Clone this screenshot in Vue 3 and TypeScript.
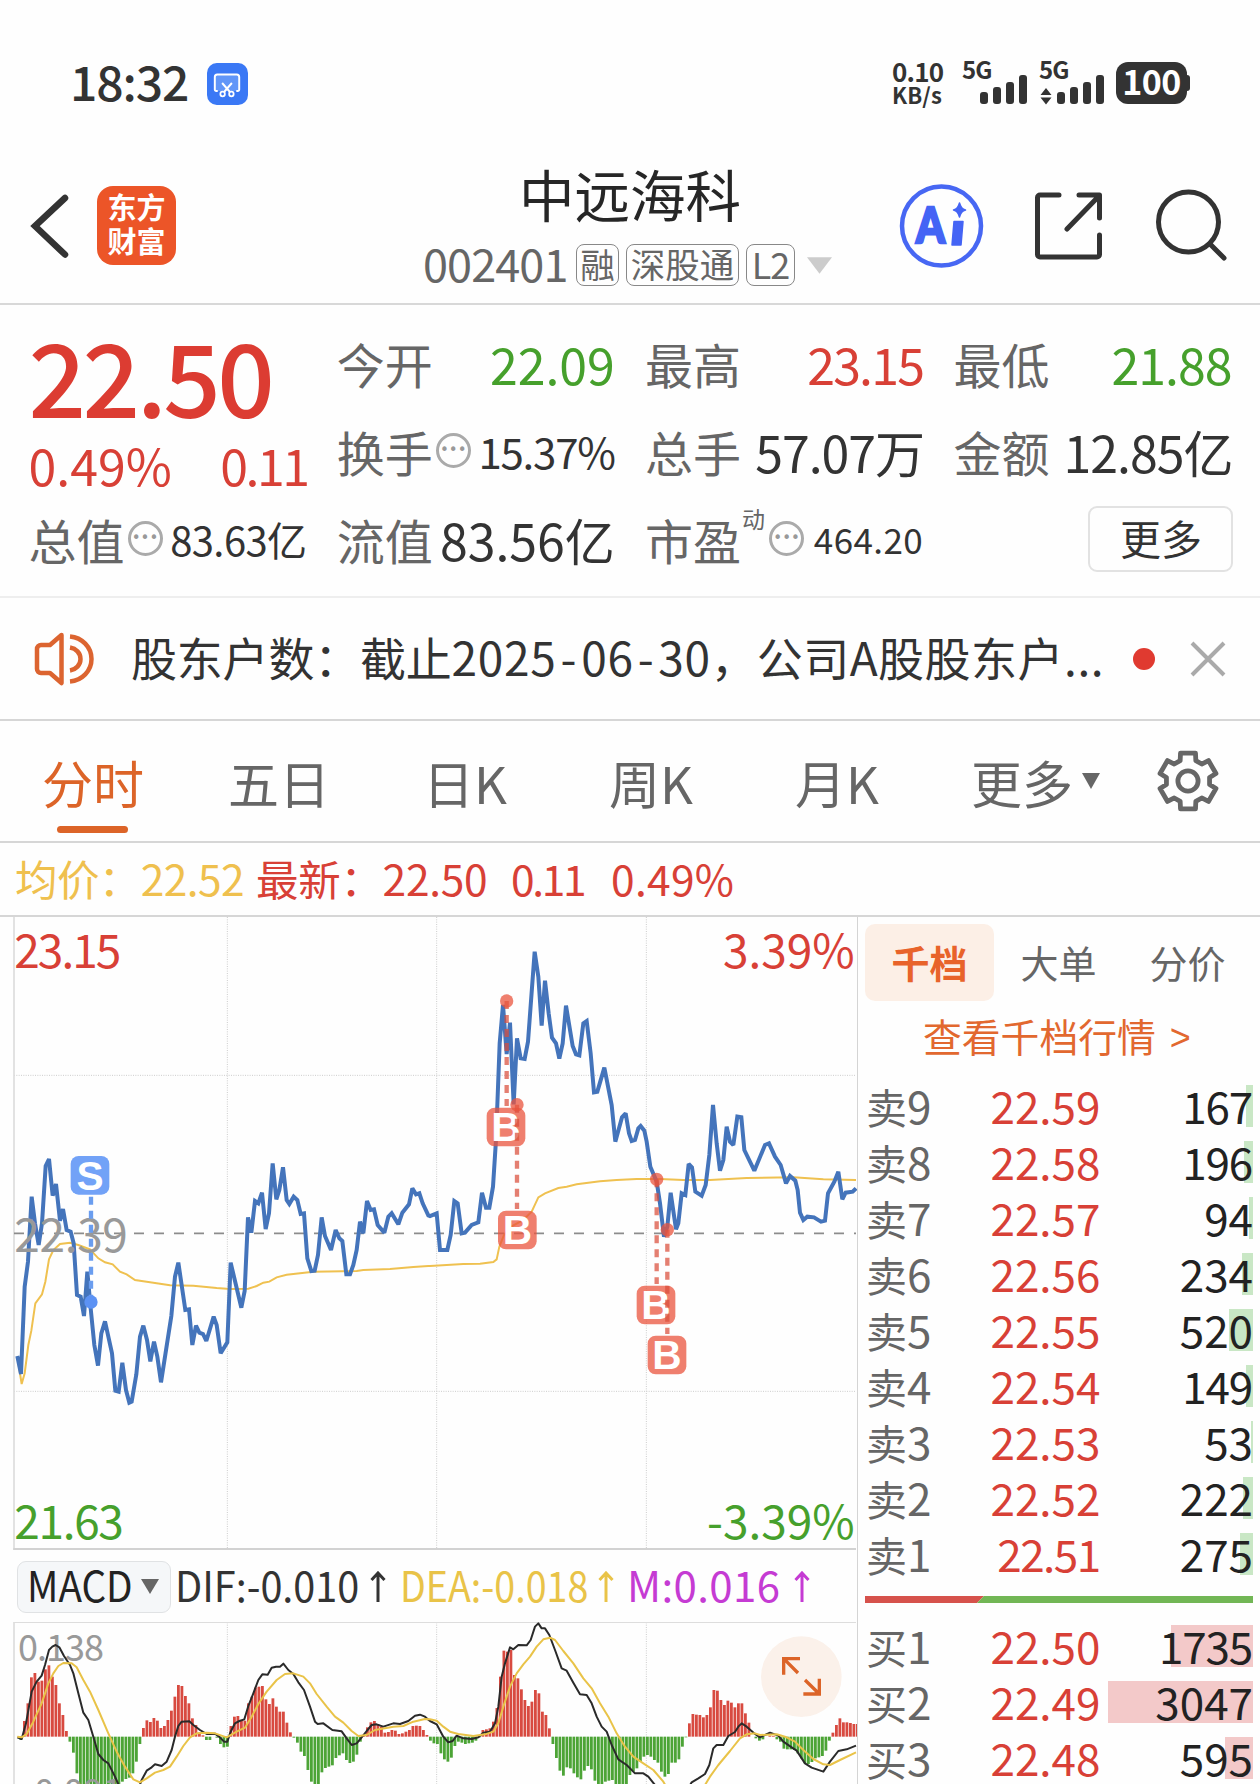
<script setup lang="ts">
interface Level {
  side: string
  n: number
  price: string
  qty: number
  bar: number
}

const sells: Level[] = [
  { side: '卖', n: 9, price: '22.59', qty: 167, bar: 7 },
  { side: '卖', n: 8, price: '22.58', qty: 196, bar: 9 },
  { side: '卖', n: 7, price: '22.57', qty: 94, bar: 4 },
  { side: '卖', n: 6, price: '22.56', qty: 234, bar: 11 },
  { side: '卖', n: 5, price: '22.55', qty: 520, bar: 24 },
  { side: '卖', n: 4, price: '22.54', qty: 149, bar: 7 },
  { side: '卖', n: 3, price: '22.53', qty: 53, bar: 2 },
  { side: '卖', n: 2, price: '22.52', qty: 222, bar: 10 },
  { side: '卖', n: 1, price: '22.51', qty: 275, bar: 13 },
]
const buys: Level[] = [
  { side: '买', n: 1, price: '22.50', qty: 1735, bar: 82 },
  { side: '买', n: 2, price: '22.49', qty: 3047, bar: 145 },
  { side: '买', n: 3, price: '22.48', qty: 595, bar: 28 },
]
// Numbers holding a "1" are set a little tighter.
const hasOne = (v: string | number): boolean => String(v).includes('1')

// Chart space uses three units per CSS pixel; the second half of the session starts at HALF.
const HALF = 1290
const join = (a: string, b: string): string =>
  a + ' ' + b.split(' ').map((p) => {
    const [x, y] = p.split(',').map(Number)
    return `${x + HALF},${y}`
  }).join(' ')

const price = join(
  '52,1338 63,1392 74,1130 84,1055 95,860 105,940 116,1005 126,940 137,768 147,747 158,857 168,822 180,932 189,897 200,960 212,965 221,1000 231,1155 242,1160 252,1218 262,1085 273,1205 283,1305 294,1367 304,1270 315,1234 336,1330 346,1442 356,1445 367,1358 378,1440 388,1478 395,1475 409,1393 420,1280 430,1247 441,1290 451,1354 462,1295 472,1340 483,1417 514,1218 525,1100 535,1058 556,1200 567,1198 577,1305 588,1247 598,1268 609,1272 619,1293 641,1220 650,1245 662,1330 682,1297 692,1058 724,1193 734,1143 744,922 754,968 765,873 775,880 786,848 797,957 807,910 818,760 829,868 838,840 849,772 860,870 868,882 881,860 892,870 902,912 912,910 922,1045 934,1083 944,1082 954,1035 965,922 975,978 993,1020 1007,960 1018,985 1027,993 1039,1093 1050,1093 1060,1065 1070,1020 1080,935 1090,970 1101,873 1112,900 1122,898 1133,945 1153,968 1165,920 1175,910 1195,943 1207,908 1227,883 1237,835 1248,853 1258,850 1268,880 1285,916',
  '0,918 20,910 30,1020 52,1020 62,975 73,873 83,880 95,970 105,968 125,945 145,937 156,848 168,893 178,893 189,830 198,690 209,400 219,285 230,432 240,338 251,583 261,385 272,445 284,447 294,395 314,125 325,200 335,347 345,212 356,310 366,383 378,400 388,446 398,400 408,287 428,408 438,433 448,436 460,340 470,333 482,430 492,547 502,545 523,473 545,585 556,695 576,622 587,610 597,670 605,693 615,690 625,655 632,648 643,662 650,695 661,770 680,815 690,880 702,980 712,950 722,848 738,958 745,940 755,850 766,855 776,762 786,772 796,845 815,857 827,825 838,735 849,585 860,700 870,782 880,750 890,650 900,695 910,705 922,620 934,622 943,720 973,782 1005,705 1017,700 1035,740 1052,765 1068,820 1080,798 1096,812 1103,840 1110,908 1120,930 1132,920 1152,922 1173,935 1185,932 1194,850 1213,815 1225,785 1237,868 1247,848 1268,845 1278,835',
)
const average = join(
  '52,1340 65,1422 74,1390 85,1305 94,1262 106,1180 126,1153 136,1115 147,1048 160,1020 180,1002 210,998 235,1005 270,1018 295,1045 315,1057 338,1063 360,1085 380,1093 405,1110 440,1115 510,1126 580,1127 650,1134 690,1137 745,1136 770,1128 790,1118 808,1115 830,1102 860,1094 940,1085 1070,1083 1090,1080 1170,1077 1240,1071 1285,1068',
  '0,1068 100,1062 150,1061 190,1056 200,1048 208,1010 222,975 240,952 280,930 305,905 325,862 345,850 385,834 410,830 440,823 510,814 560,810 620,807 690,807 760,810 840,810 950,804 1090,802 1180,808 1278,810',
)
const dif = join(
  '52,622 65,627 78,580 95,485 110,455 125,437 135,405 147,360 157,350 167,345 178,352 192,378 210,405 220,430 235,490 250,548 265,570 280,620 295,672 310,690 325,700 345,740 365,785 410,790 425,750 440,722 455,712 465,703 485,708 500,695 515,660 525,620 535,588 545,575 568,574 580,585 600,600 620,612 645,611 660,622 672,635 682,635 692,605 705,580 718,573 733,568 745,528 760,490 775,450 787,433 803,434 815,413 828,410 840,410 850,401 865,420 880,432 895,457 912,480 930,530 945,575 953,582 970,580 997,600 1025,604 1040,625 1055,645 1070,640 1085,622 1100,603 1115,585 1130,583 1150,590 1180,580 1200,582 1225,573 1245,557 1260,554 1275,560 1286,570',
  '0,573 20,583 40,620 55,637 68,633 80,617 100,625 125,627 145,622 160,608 180,605 195,580 205,530 215,440 225,400 240,352 250,358 265,345 290,346 302,330 315,290 325,280 335,295 345,295 358,315 375,360 395,415 410,422 430,458 450,493 470,495 485,520 500,560 515,590 530,605 545,645 565,688 590,705 615,730 640,730 655,740 675,765 700,800 760,800 785,757 805,745 825,732 838,705 850,655 860,645 880,645 895,618 915,606 925,590 935,580 950,590 975,612 990,622 1020,608 1045,617 1060,635 1085,652 1100,662 1125,700 1145,713 1180,725 1200,695 1225,663 1250,658 1278,647',
)
const dea = join(
  '52,620 65,622 80,612 100,575 125,520 145,460 160,430 175,408 190,399 215,400 230,412 250,450 270,485 295,540 325,610 350,665 375,710 400,748 420,757 440,745 465,728 490,720 510,710 530,680 550,648 570,622 590,610 620,608 645,610 680,622 710,605 735,593 755,560 775,522 800,485 830,450 855,432 880,430 910,440 930,460 950,492 980,530 1005,560 1030,578 1055,603 1075,618 1100,615 1125,600 1180,590 1210,588 1240,575 1275,567',
  '0,568 20,572 40,590 60,605 85,612 130,618 165,613 190,605 205,580 220,530 240,470 260,430 280,403 300,380 320,350 340,328 360,323 375,330 400,363 430,400 460,445 485,475 510,520 535,560 560,610 585,650 610,680 640,700 670,720 700,755 720,790 810,790 840,740 865,705 900,663 930,625 950,613 975,610 990,615 1040,613 1065,620 1095,635 1120,660 1150,687 1180,703 1200,705 1230,690 1278,667',
)
const macd: number[] = [
  0, -10, 47, 100, 178, 191, 165, 168, 202, 214, 180, 155, 100, 65, 17, -15, -48, -110, -150, -160, -160, -160, -160, -160, -160, -160, -160, -160, -160, -150,
  -135, -127, -123, -110, -75, -22, 26, 49, 44, 56, 48, 26, 32, 50, 78, 120, 155, 152, 122, 100, 55, 35, 12, 4, -10, -10, 0, -3, -22, -32,
  -30, 32, 60, 62, 50, 48, 100, 120, 147, 150, 152, 112, 98, 115, 90, 75, 75, 42, 13, -3, -18, -45, -58, -100, -135, -150, -150, -107, -94, -90,
  -86, -64, -56, -50, -70, -79, -75, -54, -15, 2, 28, 43, 47, 38, 30, 12, 14, 20, 18, 8, 10, 15, 20, 32, 33, 32, 20, 5, -12, -20,
  -22, -50, -68, -75, -63, -28, -15, -18, -22, -20, -18, -12, -2, 20, 22, 25, 45, 86, 180, 258, 255, 260, 185, 175, 142, 110, 92, 105, 140, 130,
  75, 65, 25, -22, -64, -102, -117, -92, -95, -110, -122, -128, -102, -88, -98, -132, -150, -150, -135, -132, -130, -150, -150, -150, -142, -115, -105, -95, -75, -60,
  -55, -60, -70, -78, -105, -120, -112, -78, -78, -68, -30, -2, 40, 68, 66, 65, 58, 65, 88, 140, 138, 110, 95, 108, 102, 88, 100, 100, 70, 42,
  0, -5, -12, -8, 0, 3, 2, -8, -15, -36, -38, -38, -40, -50, -65, -80, -82, -76, -65, -62, -58, -42, -12, 12, 35, 55, 43, 43, 41, 38, 38,
]

interface Trade {
  kind: 'B' | 'S'
  x: number
  dotY: number
  boxX: number
  boxY: number
}
const trades: Trade[] = [
  { kind: 'S', x: 273, dotY: 1176, boxX: 212, boxY: 738 },
  { kind: 'B', x: 1520, dotY: 273, boxX: 1460, boxY: 593 },
  { kind: 'B', x: 1551, dotY: 584, boxX: 1494, boxY: 902 },
  { kind: 'B', x: 1970, dotY: 808, boxX: 1910, boxY: 1127 },
  { kind: 'B', x: 2002, dotY: 959, boxX: 1943, boxY: 1277 },
]

const gear = (() => {
  const pts: string[] = []
  for (let i = 0; i < 6; i++) {
    const base = i * 60 - 90
    for (const [da, r] of [[-21, 20.5], [-15, 27.2], [15, 27.2], [21, 20.5]] as const) {
      const a = ((base + da) * Math.PI) / 180
      pts.push(`${(30 + r * Math.cos(a)).toFixed(2)},${(30 + r * Math.sin(a)).toFixed(2)}`)
    }
  }
  return pts.join(' ')
})()
</script>

<template>
  <div class="screen">
    <div class="status">
      <span class="clock">18:32</span>
      <svg class="shot" width="41" height="42" viewBox="0 0 42 42" preserveAspectRatio="none">
        <rect width="42" height="42" rx="10" fill="#3a78f5" />
        <path d="M11 28h-1.500a1.500 1.500 0 0 1-1.500-1.500V14a2.500 2.500 0 0 1 2.500-2.500h20A2.500 2.500 0 0 1 33 14v12.500a1.500 1.500 0 0 1-1.500 1.500H30" fill="#6196f8" stroke="#fff" stroke-width="2" />
        <path d="M15.500 20l8 9M25.500 20l-8 9" stroke="#fff" stroke-width="2" />
        <circle cx="16" cy="31" r="2.300" fill="#3a78f5" stroke="#fff" stroke-width="1.800" />
        <circle cx="25" cy="31" r="2.300" fill="#3a78f5" stroke="#fff" stroke-width="1.800" />
      </svg>
      <div class="speed"><span class="s1">0.10</span><span class="s2">KB/s</span></div>
      <div class="sig">
        <span>5G</span>
        <svg width="66" height="44" viewBox="0 0 66 44" fill="#333">
          <rect x="17" y="31" width="8" height="12" rx="3" /><rect x="30" y="26" width="8" height="17" rx="3" />
          <rect x="43" y="21" width="8" height="22" rx="3" /><rect x="56" y="14" width="8" height="29" rx="3" />
        </svg>
      </div>
      <div class="sig second">
        <span>5G</span>
        <svg width="66" height="44" viewBox="0 0 66 44" fill="#333">
          <path d="M0.500 34l5.500-7 5.500 7zM0.500 36.500l5.500 7 5.500-7z" />
          <rect x="17" y="31" width="8" height="12" rx="3" /><rect x="30" y="26" width="8" height="17" rx="3" />
          <rect x="43" y="21" width="8" height="22" rx="3" /><rect x="56" y="14" width="8" height="29" rx="3" />
        </svg>
      </div>
      <div class="battery">100</div><i class="nub"></i>
    </div>

    <header class="head">
      <svg class="back" width="44" height="72" viewBox="0 0 44 72"><path d="M36 7L6 35 36 63.500" fill="none" stroke="#333" stroke-width="6.500" stroke-linecap="round" /></svg>
      <div class="logo"><span>东方</span><span>财富</span></div>
      <div class="title">
        <h1>中远海科</h1>
        <div class="sub">
          <span class="code">002401</span><span class="tag t1">融</span><span class="tag t2">深股通</span><span class="tag t3">L2</span>
          <svg class="drop" width="25" height="17" viewBox="0 0 26 17"><path d="M0 0h26L13 17z" fill="#ccc" /></svg>
        </div>
      </div>
      <svg class="ai" width="86" height="86" viewBox="0 0 86 86">
        <circle cx="43.500" cy="43" r="39.500" fill="none" stroke="#4767f3" stroke-width="4.500" />
        <text x="18" y="59.500" font-family="Lato, sans-serif" font-weight="900" font-size="49" fill="#4464f5" stroke="#4464f5" stroke-width="2.500" textLength="29" lengthAdjust="spacingAndGlyphs">A</text>
        <path d="M56 38.500h9L63 62h-9zM61.500 20q1.500 6 6 7-4.500 1-6 7-1.500-6-6-7 4.500-1 6-7z" fill="#4464f5" stroke="#4464f5" stroke-width="1.500" stroke-linejoin="round" />
      </svg>
      <svg class="share" width="70" height="70" viewBox="0 0 70 70" fill="none" stroke="#333" stroke-width="5" stroke-linecap="round" stroke-linejoin="round">
        <path d="M25 4H6a2.500 2.500 0 0 0-2.500 2.500v57A2.500 2.500 0 0 0 6 66h57a2.500 2.500 0 0 0 2.500-2.500V44M45 4h20.500v23M64 6L33 38" />
      </svg>
      <svg class="find" width="72" height="72" viewBox="0 0 72 72" fill="none" stroke="#333" stroke-width="5" stroke-linecap="round"><circle cx="33.500" cy="33" r="30" /><path d="M55 55l14 14" /></svg>
    </header>

    <section class="quote">
      <div class="main"><b>22.50</b><div><span>0.49%</span><span class="chg">0.11</span></div></div>
      <div class="cell"><label>今开</label><span class="down">22.09</span></div>
      <div class="cell"><label>最高</label><span class="up">23.15</span></div>
      <div class="cell"><label>最低</label><span class="down tight">21.88</span></div>
      <div class="cell"><label>换手</label><i class="dots">•••</i><span class="m">15.37%</span></div>
      <div class="cell"><label>总手</label><span class="l">57.07万</span></div>
      <div class="cell"><label>金额</label><span class="l">12.85亿</span></div>
      <div class="cell"><label>总值</label><i class="dots">•••</i><span class="m2">83.63亿</span></div>
      <div class="cell"><label>流值</label><span>83.56亿</span></div>
      <div class="cell"><label>市盈</label><sup>动</sup><i class="dots pe">•••</i><span class="s">464.20</span></div>
      <div class="cell end"><button>更多</button></div>
    </section>

    <section class="notice">
      <svg width="62" height="56" viewBox="0 0 62 56" fill="none" stroke="#dc6430" stroke-width="4.500" stroke-linejoin="round">
        <path d="M28.500 4L17 14H8a4 4 0 0 0-4 4v20a4 4 0 0 0 4 4h9l11.500 10z" />
        <path d="M37 16.500c6 1 10.500 5.500 10.500 11.500S43 38.500 37 39.500M37 5.500c12 1 21.500 10.500 21.500 22.500S49 49.500 37 50.500" />
      </svg>
      <p>股东户数：截止<span class="date">2025<i>-</i>06<i>-</i>30</span>，<span class="tail">公司A股股东户...</span></p>
      <i class="red"></i>
      <svg class="close" width="36" height="36" viewBox="0 0 36 36" stroke="#aaa" stroke-width="4"><path d="M2 2l32 32M34 2L2 34" /></svg>
    </section>

    <nav class="tabs">
      <a class="on">分时</a><a>五日</a><a>日K</a><a>周K</a><a>月K</a><a class="more">更多<i></i></a>
      <svg width="66" height="66" viewBox="-1 -1 62 62" fill="none" stroke="#666" stroke-width="4.500"><polygon :points="gear" stroke-linejoin="round" /><circle cx="30" cy="30" r="9.500" /></svg>
    </nav>

    <div class="legend"><span class="avg">均价：22.52</span><span class="now">最新：22.50</span><span class="d1">0.11</span><span class="d2">0.49%</span></div>

    <div class="body">
      <div class="charts">
        <svg class="price" width="857" height="634" viewBox="0 21 2571 1902">
          <g stroke="#ccc" stroke-width="3" stroke-dasharray="3 4">
            <path d="M42 496H2568M42 1444H2568M682 21V1918M1310 21V1918M1939 21V1918" />
          </g>
          <path d="M42 21V1920" stroke="#ddd" stroke-width="5" />
          <path d="M40 1917H2568" stroke="#d2d2d2" stroke-width="6" />
          <path d="M42 970H2568" stroke="#8c8c8c" stroke-width="5" stroke-dasharray="30 30" />
          <polyline :points="average" fill="none" stroke="#efc150" stroke-width="6" />
          <polyline :points="price" fill="none" stroke="#4474bb" stroke-width="12" stroke-linejoin="miter" stroke-miterlimit="2" />
          <g font-size="138">
            <text x="43" y="174" fill="#d84036" letter-spacing="-6">23.15</text>
            <text x="2564" y="174" fill="#d84036" text-anchor="end">3.39%</text>
            <text x="43" y="1026" fill="#999" letter-spacing="-1">22.39</text>
            <text x="43" y="1886" fill="#46a02c" letter-spacing="-4">21.63</text>
            <text x="2564" y="1886" fill="#46a02c" text-anchor="end">-3.39%</text>
          </g>
          <g v-for="t in trades" :key="t.x" :class="t.kind === 'S' ? 'sell-mark' : 'buy-mark'">
            <path v-if="t.kind === 'S'" :d="`M${t.x} 860V${t.dotY}`" class="stem" />
            <path v-else :d="`M${t.x} ${t.dotY}V${t.boxY - 5}`" class="stem" />
            <circle :cx="t.x" :cy="t.dotY" r="20" />
            <rect :x="t.boxX" :y="t.boxY" width="116" height="116" rx="24" />
            <text :x="t.boxX + 58" :y="t.boxY + 101" text-anchor="middle">{{ t.kind }}</text>
          </g>
        </svg>
        <div class="indicator">
          <div class="pick"><span>MACD</span><i></i></div>
          <span class="dif">DIF:-0.010</span>
          <svg width="16" height="32" viewBox="0 0 16 32"><path d="M8 31V2M1.500 9L8 2l6.500 7" /></svg>
          <span class="dea">DEA:-0.018</span>
          <svg class="y" width="16" height="32" viewBox="0 0 16 32"><path d="M8 31V2M1.500 9L8 2l6.500 7" /></svg>
          <span class="mm">M:0.016</span>
          <svg class="p" width="16" height="32" viewBox="0 0 16 32"><path d="M8 31V2M1.500 9L8 2l6.500 7" /></svg>
        </div>
        <svg class="macd" width="857" height="162" viewBox="0 276 2571 486">
          <path d="M682 277V762M1310 277V762M1939 277V762" stroke="#ccc" stroke-width="3" stroke-dasharray="3 4" />
          <path d="M40 277H2568" stroke="#ddd" stroke-width="4" />
          <path d="M42 277V762" stroke="#ddd" stroke-width="5" />
          <rect v-for="(v, i) in macd" :key="i" :x="48 + i * 10.5" :y="v > 0 ? 620 - v : 620" width="8.400" :height="Math.abs(v)" :fill="v > 0 ? '#d84a40' : '#4ca436'" />
          <g font-size="108" fill="#999"><text x="54" y="394" letter-spacing="-3">0.138</text><text x="66" y="824" letter-spacing="-1">-0.091</text></g>
          <polyline :points="dif" fill="none" stroke="#2a2a2a" stroke-width="6" stroke-linejoin="round" />
          <polyline :points="dea" fill="none" stroke="#e9c348" stroke-width="6" stroke-linejoin="round" />
          <circle cx="2404" cy="440" r="121" fill="#fbf1ea" />
          <path d="M2351 434V386h49M2354 389l40 40M2410 492h48V446M2455 489l-40-39" fill="none" stroke="#dc6428" stroke-width="10" />
        </svg>
      </div>

      <aside class="book">
        <div class="btabs"><span class="on">千档</span><span>大单</span><span>分价</span></div>
        <div class="link">查看千档行情<i>&gt;</i></div>
        <div v-for="r in sells" :key="r.price" class="lv">
          <span class="nm">{{ r.side }}<em>{{ r.n }}</em></span><span class="pr" :class="{ one: hasOne(r.price) }">{{ r.price }}</span>
          <span class="qt sell" :class="{ narrow: hasOne(r.qty) }" :style="{ backgroundSize: r.bar + 'px 42px' }">{{ r.qty }}</span>
        </div>
        <svg class="ratio" width="388" height="7" viewBox="0 0 388 7"><path d="M0 0h119l-7 7H0z" fill="#d6524c" /><path d="M119 0h269v7H112z" fill="#72b655" /></svg>
        <div v-for="r in buys" :key="r.price" class="lv">
          <span class="nm">{{ r.side }}<em>{{ r.n }}</em></span><span class="pr">{{ r.price }}</span>
          <span class="qt buy" :class="{ narrow: hasOne(r.qty) }" :style="{ backgroundSize: r.bar + 'px 42px' }">{{ r.qty }}</span>
        </div>
      </aside>
    </div>
  </div>
</template>

<style>
body { margin: 0; overflow: hidden; background: #fefefe; }
</style>

<style scoped>
* { box-sizing: border-box; }
.screen {
  width: 1260px; height: 1784px; overflow: hidden; background: #fefefe; color: #333;
  font-family: "Noto Sans CJK SC", "Noto Sans", sans-serif; white-space: nowrap;
}
i, em { font-style: normal; }
svg { display: block; flex: none; }

.status { height: 146px; display: flex; align-items: flex-start; padding: 62px 0 0 70px; }
.clock { font-size: 48px; font-weight: 500; line-height: 36px; letter-spacing: -1.100px; width: 137px; }
.shot { margin-top: 1px; }
.speed { display: flex; flex-direction: column; margin-left: 644px; width: 71px; font-weight: 700; }
.s1 { font-size: 26px; line-height: 17px; letter-spacing: -.8px; }
.s2 { font-size: 22px; line-height: 30px; letter-spacing: .1px; }
.sig { width: 77px; height: 44px; position: relative; font-weight: 700; font-size: 24px; line-height: 14px; letter-spacing: -1px; }
.sig span { margin-left: -1px; }
.sig svg { position: absolute; left: 0; top: -1px; }
.battery { margin-left: -1px; width: 71px; height: 42px; border-radius: 12px; background: #333; color: #fff; font-size: 34px; line-height: 38px; font-weight: 700; text-align: center; letter-spacing: -.5px; }
.nub { width: 3px; height: 16px; background: #333; margin-top: 13px; border-radius: 0 3px 3px 0; }

.head { height: 159px; border-bottom: 2px solid #d8d8d8; display: flex; align-items: flex-start; }
.back { margin: 45px 0 0 29px; }
.logo { margin: 40px 0 0 24px; width: 79px; height: 79px; border-radius: 16px; background: #ec5528; color: #fff; font-weight: 700; font-size: 29px; line-height: 34px; display: flex; flex-direction: column; align-items: center; padding-top: 3px; }
.title { margin-left: 247px; width: 417px; display: flex; flex-direction: column; }
h1 { margin: 17px 0 0 96px; font-weight: 400; font-size: 55.500px; line-height: 60px; color: #262626; }
.sub { display: flex; align-items: center; height: 42px; margin-top: 21px; color: #666; }
.code { font-size: 45px; line-height: 42px; letter-spacing: -.9px; width: 153px; padding-bottom: 4px; }
.tag { border: 1.500px solid #888; border-radius: 8px; height: 42px; font-size: 34.500px; line-height: 37px; text-align: center; }
.t1 { width: 43px; }
.t2 { width: 113px; margin-left: 7px; }
.t3 { width: 49px; margin-left: 7px; font-size: 36px; letter-spacing: -1px; }
.drop { margin-left: 12px; }
.ai { margin: 37px 0 0 58px; }
.share { margin: 45px 0 0 50px; }
.find { margin: 43px 0 0 51px; }

.quote {
  height: 293px; border-bottom: 2px solid #eee; padding: 12px 0 0 28.500px;
  display: grid; grid-template-columns: repeat(4, 280px); column-gap: 28.300px; grid-template-rows: repeat(3, 88px);
}
.main { grid-row: span 2; display: flex; flex-direction: column; color: #dc3c32; }
.main b { font-size: 101px; font-weight: 500; line-height: 106px; margin-top: 4px; letter-spacing: -3.500px; }
.main div { display: flex; justify-content: space-between; font-size: 50px; line-height: 74px; letter-spacing: 0; color: #d84036; padding-right: 1px; }
.main .chg { letter-spacing: -2.500px; }
.cell { display: flex; align-items: center; height: 88px; font-size: 50px; }
.cell label { font-size: 48px; color: #666; width: 98px; line-height: 84px; padding-top: 4px; }
.cell span { margin-left: auto; line-height: 84px; padding: 4px 2px 0 0; }
.cell .l { letter-spacing: -1px; padding-right: 1px; }
.cell .m { font-size: 42px; letter-spacing: -1.200px; }
.cell .m2 { font-size: 40px; letter-spacing: -.6px; }
.cell .s { font-size: 35px; letter-spacing: .4px; }
.down { color: #46a02c; }
.up { color: #d84036; letter-spacing: -1.800px; }
.tight { letter-spacing: -1px; }
.dots { width: 35px; height: 35px; border: 3px solid #aaa; border-radius: 50%; color: #999; font: 15px/29px "DejaVu Sans", sans-serif; text-align: center; letter-spacing: 0; }
.cell .dots { margin-left: 1px; margin-top: 2px; }
sup { font-size: 23px; line-height: 24px; color: #666; align-self: flex-start; margin: 13px 0 0 -1px; width: 23px; }
.cell .dots.pe { margin-left: 4px; }
.cell.end { justify-content: flex-end; }
button { width: 145px; height: 66px; border: 2px solid #e2e2e2; border-radius: 9px; background: none; font: 41px/56px "Noto Sans CJK SC", sans-serif; color: #333; padding: 0 0 4px; margin-top: 4px; }

.notice { height: 123px; border-bottom: 2px solid #d6d6d6; display: flex; align-items: center; padding-left: 33px; }
.notice p { margin: 0; width: 1011px; padding: 0 0 5px 36px; font-size: 46px; line-height: 60px; letter-spacing: -.2px; }
.date { letter-spacing: .7px; }
.date i { padding: 0 4px; }
.tail { letter-spacing: .5px; }
.red { width: 22px; height: 22px; border-radius: 50%; background: #e03a30; margin-left: 27px; flex: none; }
.close { margin-left: 35px; }

.tabs { height: 122px; border-bottom: 2px solid #d6d6d6; display: flex; align-items: center; color: #666; font-size: 51px; }
.tabs a { width: 186px; text-align: center; line-height: 118px; height: 120px; position: relative; padding-top: 2px; }
.tabs a.on { color: #dc6428; }
.tabs a.on::after { content: ""; position: absolute; left: 57px; bottom: 8px; width: 71px; height: 7px; border-radius: 4px; background: #dc6428; }
.tabs .more { width: 150px; display: flex; align-items: center; margin-left: 41px; }
.more i { border: 9px solid transparent; border-top: 16px solid #666; border-bottom: 0; margin-left: 9px; margin-top: -2px; }
.tabs svg { margin-left: 34px; }

.legend { height: 74px; border-bottom: 2px solid #d6d6d6; font-size: 42.500px; line-height: 69px; display: flex; color: #d84036; }
.avg { color: #efc04e; margin-left: 15px; width: 241px; letter-spacing: -.6px; }
.now { width: 255px; letter-spacing: -.3px; }
.d1 { width: 100px; letter-spacing: -2.300px; }
.d2 { letter-spacing: .3px; }

.body { display: flex; height: 868px; }
.charts { width: 857px; }
.sell-mark { fill: #5c92f4; }
.sell-mark .stem { stroke: #6a9def; }
.sell-mark rect { fill: #72a2f7; }
.buy-mark { fill: rgba(234, 84, 62, .75); }
.buy-mark .stem { stroke: rgba(218, 78, 58, .72); }
.stem { stroke-width: 13; stroke-dasharray: 24 18; }
.buy-mark text, .sell-mark text { font: 700 122px "Liberation Sans", sans-serif; fill: #fff; }

.indicator { height: 71px; display: flex; align-items: center; font-size: 42px; padding-left: 17px; }
.pick { width: 154px; height: 52px; border: 1.500px solid #e0e2e4; border-radius: 9px; background: #f5f7f9; display: flex; align-items: center; padding-left: 9px; }
.pick span { width: 114px; line-height: 46px; padding-bottom: 5px; transform: scaleX(.92); transform-origin: 0 50%; color: #222; }
.pick i { border: 9px solid transparent; border-top: 15px solid #666; border-bottom: 0; }
.indicator > span { line-height: 60px; padding-bottom: 6px; transform-origin: 0 50%; }
.dif { margin-left: 4px; width: 195px; transform: scaleX(.942); }
.dea { margin-left: 14px; width: 198px; transform: scaleX(.895); color: #e9c348; }
.mm { margin-left: 13px; width: 167px; color: #c53bd3; letter-spacing: .4px; }
.indicator > svg { fill: none; stroke: #333; stroke-width: 3; }
.indicator > .y { stroke: #e9c348; }
.indicator > .p { stroke: #c53bd3; }

.book { width: 403px; border-left: 1.500px solid #d4d4d4; padding: 7px 0 0 7px; }
.btabs { display: flex; height: 77px; font-size: 38px; line-height: 75px; color: #666; }
.btabs span { width: 129px; text-align: center; }
.btabs .on { background: #fcefe6; border-radius: 10px; color: #e8632a; font-weight: 700; }
.link { height: 79px; padding-left: 58px; font-size: 38.800px; line-height: 69px; color: #e2682f; display: flex; }
.link i { margin-left: 14px; font-family: "Liberation Sans", sans-serif; font-size: 36px; line-height: 74px; }
.lv { display: flex; height: 56px; line-height: 51px; font-size: 44px; }
.nm { width: 96px; padding-left: 1px; font-size: 41px; color: #666; }
.nm em { font-size: 44px; }
.pr { width: 169px; text-align: center; color: #d84036; }
.pr.one { letter-spacing: -1.500px; padding-left: 6px; }
.qt { width: 146px; margin-left: -23px; text-align: right; color: #222; background-repeat: no-repeat; background-position: right 5px; }
.narrow { letter-spacing: -1.200px; padding-right: 1px; }
.sell { background-image: linear-gradient(#c9e7c5, #c9e7c5); }
.buy { background-image: linear-gradient(#f3c9c9, #f3c9c9); }
.ratio { margin: 12px 0 17px; }
</style>
